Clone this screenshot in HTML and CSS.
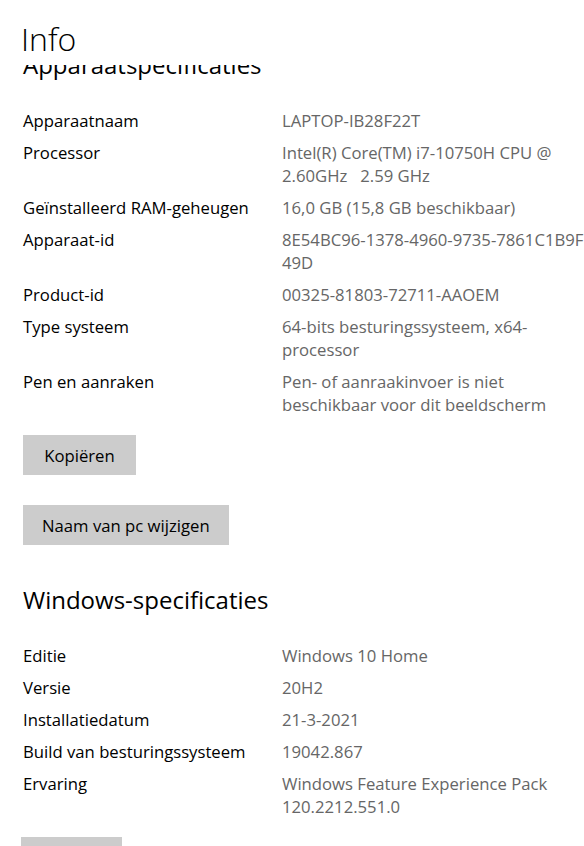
FILE: index.html
```html
<!DOCTYPE html>
<html lang="nl">
<head>
    <meta charset="UTF-8">
    <meta name="viewport" content="width=device-width, initial-scale=1.0">
    <title>Info</title>
    <link rel="stylesheet" href="styles.css">
</head>
<body>
    <div class="header">
        <h1>Info</h1>
    </div>

    <div class="scroller">
        <div class="content">
            <section class="section">
                <h2>Apparaatspecificaties</h2>
                <div class="specs">
                    <div class="label">Apparaatnaam</div>
                    <div class="value">LAPTOP-IB28F22T</div>
                    <div class="label">Processor</div>
                    <div class="value">Intel(R) Core(TM) i7-10750H CPU @<br>2.60GHz&nbsp;&nbsp;&nbsp;2.59 GHz</div>
                    <div class="label">Geïnstalleerd RAM-geheugen</div>
                    <div class="value">16,0 GB (15,8 GB beschikbaar)</div>
                    <div class="label">Apparaat-id</div>
                    <div class="value">8E54BC96-1378-4960-9735-7861C1B9F<br>49D</div>
                    <div class="label">Product-id</div>
                    <div class="value">00325-81803-72711-AAOEM</div>
                    <div class="label">Type systeem</div>
                    <div class="value">64-bits besturingssysteem, x64-<br>processor</div>
                    <div class="label">Pen en aanraken</div>
                    <div class="value">Pen- of aanraakinvoer is niet<br>beschikbaar voor dit beeldscherm</div>
                </div>
                <button class="btn">Kopiëren</button>
                <button class="btn">Naam van pc wijzigen</button>
            </section>

            <section class="section">
                <h2>Windows-specificaties</h2>
                <div class="specs">
                    <div class="label">Editie</div>
                    <div class="value">Windows 10 Home</div>
                    <div class="label">Versie</div>
                    <div class="value">20H2</div>
                    <div class="label">Installatiedatum</div>
                    <div class="value">21-3-2021</div>
                    <div class="label">Build van besturingssysteem</div>
                    <div class="value">19042.867</div>
                    <div class="label">Ervaring</div>
                    <div class="value">Windows Feature Experience Pack<br>120.2212.551.0</div>
                </div>
                <button class="btn btn-small">Kopiëren</button>
            </section>
        </div>
    </div>
</body>
</html>
```

FILE: styles.css
```css
body {
    margin: 0;
    font-family: "Open Sans", "Noto Sans", sans-serif;
    background-color: #fff;
    color: #000;
    overflow: hidden;
}
.header {
    height: 65px;
    padding-left: 21px;
    box-sizing: border-box;
    overflow: hidden;
}
h1 {
    margin: 23px 0 0 0;
    font-size: 32px;
    font-weight: 300;
    line-height: 32px;
}
.scroller {
    height: calc(100vh - 65px);
    overflow: hidden;
}
.content {
    margin-top: -17px;
}
.section {
    padding-left: 23px;
    margin-bottom: 38px;
}
h2 {
    margin: 0;
    font-size: 24px;
    font-weight: 400;
    line-height: 34px;
}
.specs {
    display: grid;
    grid-template-columns: 259px 1fr;
    row-gap: 9px;
    margin-top: 27px;
    margin-bottom: 19px;
    font-size: 16.7px;
    line-height: 23px;
}
.value {
    color: #666;
    white-space: nowrap;
}
.btn {
    display: block;
    min-width: 113px;
    height: 40px;
    padding: 0 19px;
    margin-bottom: 30px;
    border: none;
    background: #ccc;
    color: #000;
    font-family: inherit;
    font-size: 16.7px;
}
.btn:last-child {
    margin-bottom: 0;
}
.btn-small {
    min-width: 101px;
    width: 101px;
    margin-left: -2px;
}
```
